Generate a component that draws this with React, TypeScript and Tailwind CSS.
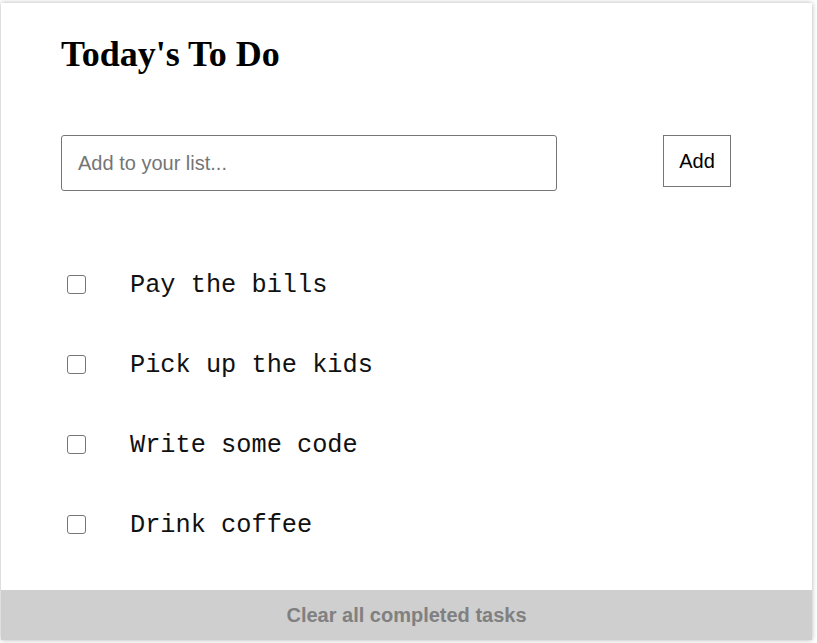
import React from "react";

const items = ["Pay the bills", "Pick up the kids", "Write some code", "Drink coffee"];

export default function App() {
  return (
    <div className="w-[817px] h-[643px] bg-white overflow-hidden">
      <div className="ml-[1px] mt-[3px] w-[811px] h-[637px] bg-white flex flex-col shadow-[0_0_5px_rgba(0,0,0,0.3)]">
        <div className="flex-1 pl-[60px]">
          <h1
            className="mt-[31px] text-[36px] leading-[41px] font-bold text-black"
            style={{ fontFamily: '"Liberation Serif", "Times New Roman", serif' }}
          >
            Today's To Do
          </h1>
          <div className="mt-[60px] flex items-start">
            <input
              type="text"
              placeholder="Add to your list..."
              className="w-[496px] h-[56px] border border-[#767676] rounded-[3px] px-[16px] text-[20px] text-black placeholder:text-[#757575] outline-none"
              style={{ fontFamily: '"Liberation Sans", Arial, sans-serif' }}
            />
            <button
              className="ml-[106px] w-[68px] h-[52px] border border-[#767676] bg-white text-[20px] text-black"
              style={{ fontFamily: '"Liberation Sans", Arial, sans-serif' }}
            >
              Add
            </button>
          </div>
          <ul className="mt-[53px]">
            {items.map((t) => (
              <li key={t} className="h-[80px] flex items-center">
                <input
                  type="checkbox"
                  className="appearance-none ml-[6px] m-0 w-[19px] h-[19px] border-[1.5px] border-[#767676] rounded-[3px] bg-white"
                />
                <span
                  className="ml-[44px] pt-[4px] text-[25.3px] text-[#111]"
                  style={{ fontFamily: '"Liberation Mono", "Courier New", monospace' }}
                >
                  {t}
                </span>
              </li>
            ))}
          </ul>
        </div>
        <div
          className="h-[50px] bg-[#cfcfcf] flex items-center justify-center text-[20px] font-bold text-[#808080]"
          style={{ fontFamily: '"Liberation Sans Narrow", "Arial Narrow", sans-serif' }}
        >
          Clear all completed tasks
        </div>
      </div>
    </div>
  );
}
